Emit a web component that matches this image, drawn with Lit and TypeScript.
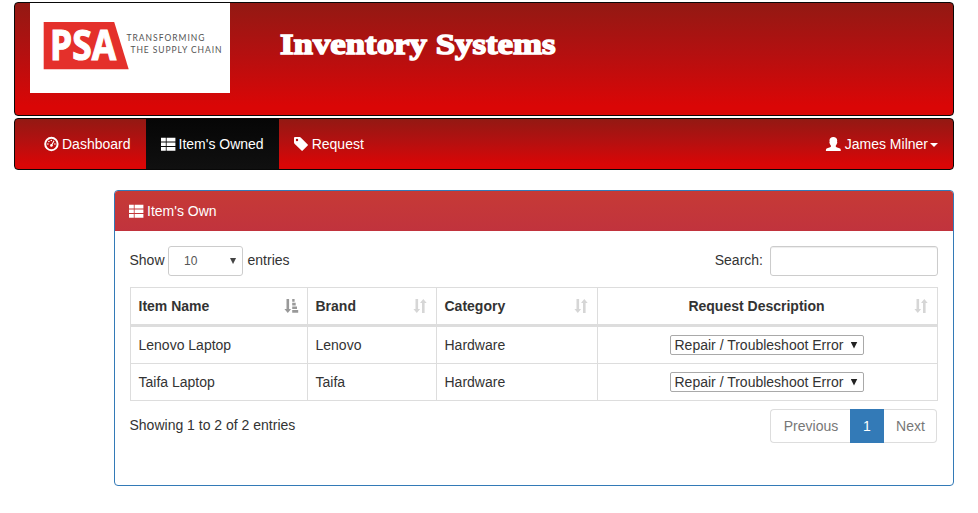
import { LitElement, html, css, svg } from "lit";
import { customElement } from "lit/decorators.js";
import { classMap } from "lit/directives/class-map.js";

const listIcon = html`<svg class="icon" viewBox="0 0 14 14">
  ${[0.8, 5.4, 10].map(
    (y) => svg`<path fill="currentColor" d="M0 ${y}h4.800v3.700h-4.800z M5.600 ${y}h8.800v3.700h-8.800z" />`
  )}
</svg>`;

const dashboardIcon = html`<svg class="icon" viewBox="0 0 14 14">
  <circle cx="7.400" cy="7" r="6.200" fill="none" stroke="currentColor" stroke-width="2" />
  <g fill="currentColor">
    <circle cx="3.900" cy="7" r=".8" />
    <circle cx="4.900" cy="4.500" r=".8" />
    <circle cx="7.300" cy="3.500" r=".8" />
    <circle cx="10.900" cy="7" r=".8" />
    <path d="M9.600 3.400l.9.500-1.900 3.700a1.400 1.400 0 1 1-1-.6z" />
  </g>
</svg>`;

const tagIcon = html`<svg class="icon" viewBox="0 0 14 14">
  <path
    fill="currentColor"
    fill-rule="evenodd"
    d="M.9 0h4.700c.4 0 .8.2 1.100.5l7 6.900c.4.4.4.8 0 1.200l-5 5c-.4.4-.8.4-1.200 0L.5 6.700C.2 6.400 0 6 0 5.600V.9C0 .4.4 0 .9 0zM3 1.800a1.200 1.200 0 1 0 0 2.400a1.200 1.200 0 1 0 0-2.400z"
  />
</svg>`;

const userIcon = html`<svg class="icon" viewBox="0 0 14 14">
  <path
    fill="currentColor"
    d="M7.300 0C9.700 0 11.200 1.300 11.200 3.500c0 .6-.1 1-.2 1.400.5.200.4 1-.2 1.800-.3.900-.7 1.500-1 1.900v1.100c.3.500 3.900 1.300 4.600 2 .4.500.4 1.200.4 2.300H-.1c0-1.100 0-1.800.4-2.300.7-.7 4.200-1.500 4.600-2V8.600c-.4-.4-.8-1-1-1.900-.6-.8-.7-1.600-.2-1.800-.1-.4-.2-.8-.2-1.400C3.500 1.300 5 0 7.300 0z"
  />
</svg>`;

const sortBoth = html`<svg class="sort" viewBox="0 0 14 14">
  <path fill="#d6d6d6" d="M2.500 0h2.600v10h2L3.800 14 .4 10h2.100z M9 14h2.600V4h2.100L10.300 0 7 4h2z" />
</svg>`;

const sortAsc = html`<svg class="sort" viewBox="0 0 14 14">
  <path
    fill="#999"
    d="M2.500 0h2.600v10h2L3.800 14 .4 10h2.100z M8.200 0h2.400v2.700h-2.400z M8.200 3.800h3.500v2.600h-3.500z M8.200 7.400h4.800v2.600h-4.800z M8.200 11.100h6v2.600h-6z"
  />
</svg>`;

@customElement("app-root")
export class AppRoot extends LitElement {
  static styles = css`
    :host {
      display: block;
      box-sizing: border-box;
      height: 513px;
      padding: 2px 24px 0 14px;
      background: #fff;
      color: #333;
      font: 14px/20px "Liberation Sans", Arial, sans-serif;
      overflow: hidden;
    }
    * { box-sizing: border-box; }
    .banner, .nav {
      display: flex;
      border: 1px solid #080808;
      border-radius: 4px;
      background: linear-gradient(#931913, #b41010 45%, #da0606 92%, #da0606);
    }
    .banner { height: 114px; padding-left: 15px; margin-bottom: 2px; }
    .logo { display: block; width: 200px; height: 90px; background: #fff; }
    .title { display: block; width: 300px; height: 60px; margin: 15px 0 0 40px; }
    .title text {
      font: bold 29.500px "Liberation Serif", serif;
      fill: #fff;
      stroke: #fff;
      stroke-width: 1.500;
    }
    .psa {
      font: bold 40.500px "Open Sans", sans-serif;
      fill: #fff;
      stroke: #fff;
      stroke-width: 1.200;
    }
    .tag { font: 8.500px Lato, sans-serif; fill: #555; }
    .nav { height: 52px; padding-left: 14px; color: #fff; margin-bottom: 20px; }
    .link { display: flex; align-items: center; padding: 0 15px; gap: 4px; white-space: nowrap; }
    .active { background: linear-gradient(#060606, #101010); }
    .user { margin-left: auto; }
    .user .icon { margin-right: 0.500px; }
    .icon { width: 14px; height: 14px; flex: none; overflow: visible; margin-top: -1px; }
    .caret {
      border: 4px solid transparent;
      border-top-color: #fff;
      border-bottom: 0;
      margin: 2px 0 0 -2px;
    }
    .panel {
      margin-left: 100px;
      height: 296px;
      border: 1px solid #337ab7;
      border-radius: 4px;
      overflow: hidden;
    }
    .heading {
      display: flex;
      align-items: center;
      gap: 4px;
      height: 40px;
      padding-left: 14px;
      color: #fff;
      background: linear-gradient(#c63a36, #c1333d);
    }
    .body { padding: 15px 15px 15px 14.500px; }
    .bar { display: flex; align-items: center; height: 30px; margin-bottom: 11px; }
    .bar > span { padding-bottom: 2px; }
    .length {
      display: flex;
      align-items: center;
      justify-content: space-between;
      width: 75px;
      height: 30px;
      margin: 0 4.500px 0 3.500px;
      padding: 0 6px 0 15px;
      border: 1px solid #ccc;
      border-radius: 3px;
      font-size: 12px;
      color: #555;
    }
    .arrow {
      width: 6px;
      height: 6px;
      background: #444;
      clip-path: polygon(0 0, 100% 0, 50% 100%);
    }
    .search {
      width: 168px;
      height: 30px;
      margin-left: 7px;
      border: 1px solid #ccc;
      border-radius: 3px;
      box-shadow: inset 0 1px 1px rgba(0, 0, 0, 0.075);
    }
    .search-label { margin-left: auto; }
    .table {
      border-left: 1px solid #ddd;
      border-top: 1px solid #ddd;
      width: 808px;
      margin-left: 0.500px;
    }
    .row {
      display: grid;
      grid-template-columns: 177px 129px 161px 340px;
      height: 37px;
    }
    .cell {
      display: flex;
      align-items: center;
      padding: 0 7.500px;
      border-right: 1px solid #ddd;
      border-bottom: 1px solid #ddd;
    }
    .head { height: 39px; font-weight: bold; }
    .head .cell { justify-content: space-between; border-bottom-width: 3px; padding-right: 9px; }
    .head .cell:last-child { padding-left: 0; }
    .head .cell:last-child span { flex: 1; text-align: center; padding-left: 1px; }
    .sort { width: 14px; height: 14px; overflow: visible; }
    .request { justify-content: center; padding: 0 9px 0 7px; }
    .choice {
      display: flex;
      align-items: center;
      justify-content: space-between;
      width: 194px;
      height: 20px;
      padding: 0 5px 0 4px;
      border: 1px solid #a9a9a9;
      border-radius: 2px;
      white-space: nowrap;
    }
    .choice .arrow { background: #222; width: 7px; height: 7px; }
    .foot { display: flex; justify-content: space-between; padding: 8px 1px 0 0; }
    .info { padding-top: 6px; }
    .pages { display: flex; height: 34px; color: #777; }
    .page {
      display: flex;
      align-items: center;
      justify-content: center;
      border: 1px solid #ddd;
      width: 80px;
      padding-left: 1px;
      border-right: 0;
      border-radius: 4px 0 0 4px;
    }
    .page.current {
      width: 34px;
      padding: 0;
      border: 0;
      border-radius: 0;
      background: #337ab7;
      color: #fff;
    }
    .page.next { width: 53px; border: 1px solid #ddd; border-left: 0; border-radius: 0 4px 4px 0; }
  `;

  private columns = ["Item Name", "Brand", "Category", "Request Description"];
  private items = [
    ["Lenovo Laptop", "Lenovo", "Hardware"],
    ["Taifa Laptop", "Taifa", "Hardware"],
  ];
  private pages = ["Previous", "1", "Next"];

  render() {
    return html`
      <header class="banner">
        <svg class="logo" viewBox="30 3 200 90">
          <path d="M43.700 22h70.500l14.500 47.300h-85z" fill="#e4302b" />
          <text class="psa" x="50" y="60" textLength="66" lengthAdjust="spacingAndGlyphs">PSA</text>
          <text class="tag" x="126.500" y="41" textLength="78">TRANSFORMING</text>
          <text class="tag" x="130.500" y="53" textLength="91">THE SUPPLY CHAIN</text>
        </svg>
        <svg class="title" viewBox="270 18 300 60">
          <text x="280" y="54" textLength="275.500" lengthAdjust="spacingAndGlyphs">Inventory Systems</text>
        </svg>
      </header>
      <nav class="nav">
        <div class="link">${dashboardIcon}<span>Dashboard</span></div>
        <div class="link active">${listIcon}<span>Item's Owned</span></div>
        <div class="link">${tagIcon}<span>Request</span></div>
        <div class="link user">${userIcon}<span>James Milner</span><span class="caret"></span></div>
      </nav>
      <section class="panel">
        <div class="heading">${listIcon}<span>Item's Own</span></div>
        <div class="body">
          <div class="bar">
            <span>Show</span>
            <div class="length"><span>10</span><span class="arrow"></span></div>
            <span>entries</span>
            <span class="search-label">Search:</span>
            <div class="search"></div>
          </div>
          <div class="table">
            <div class="row head">
              ${this.columns.map(
                (name, i) => html`<div class="cell"><span>${name}</span>${i === 0 ? sortAsc : sortBoth}</div>`
              )}
            </div>
            ${this.items.map(
              (item) => html`<div class="row">
                ${item.map((value) => html`<div class="cell">${value}</div>`)}
                <div class="cell request">
                  <div class="choice"><span>Repair / Troubleshoot Error</span><span class="arrow"></span></div>
                </div>
              </div>`
            )}
          </div>
          <div class="foot">
            <span class="info">Showing 1 to 2 of 2 entries</span>
            <div class="pages">
              ${this.pages.map(
                (p) => html`<span class=${classMap({ page: true, current: p === "1", next: p === "Next" })}>${p}</span>`
              )}
            </div>
          </div>
        </div>
      </section>
    `;
  }
}
